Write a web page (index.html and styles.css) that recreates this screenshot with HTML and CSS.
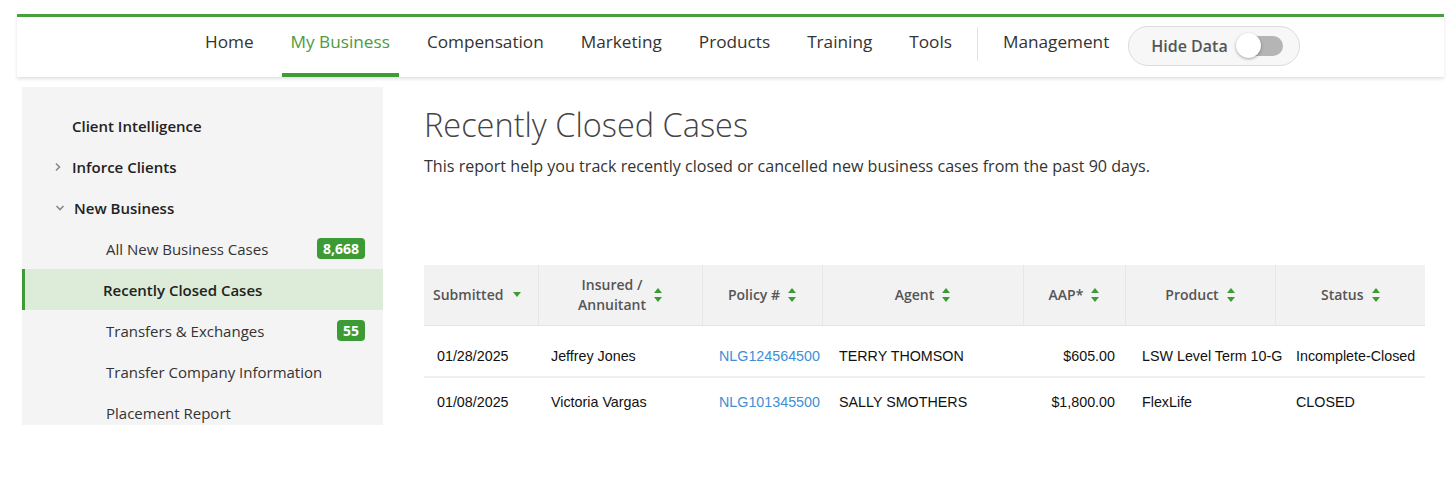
FILE: index.html
```html
<!DOCTYPE html>
<html lang="en">
<head>
  <meta charset="UTF-8">
  <title>Recently Closed Cases</title>
  <link rel="stylesheet" href="styles.css">
</head>
<body>
  <div class="page">
    <!-- Top navigation -->
    <nav class="topnav">
      <ul class="nav-links">
        <li>Home</li>
        <li class="active">My Business</li>
        <li>Compensation</li>
        <li>Marketing</li>
        <li>Products</li>
        <li>Training</li>
        <li>Tools</li>
      </ul>
      <span class="nav-divider"></span>
      <ul class="nav-links">
        <li>Management</li>
      </ul>
      <div class="hide-data">
        <span>Hide Data</span>
        <span class="toggle"><span class="knob"></span></span>
      </div>
    </nav>

    <div class="content">
      <!-- Side menu -->
      <aside class="sidebar">
        <div class="side-item top">Client Intelligence</div>
        <div class="side-item top">
          <svg class="chev" width="10" height="10" viewBox="0 0 10 10"><path d="M3 1.5 L6.5 5 L3 8.5" fill="none" stroke="#888" stroke-width="1.6"/></svg>
          Inforce Clients
        </div>
        <div class="side-item top open">
          <svg class="chev" width="10" height="10" viewBox="0 0 10 10"><path d="M1.5 3 L5 6.5 L8.5 3" fill="none" stroke="#888" stroke-width="1.6"/></svg>
          New Business
        </div>
        <div class="side-item sub">All New Business Cases <span class="badge">8,668</span></div>
        <div class="side-item sub selected">Recently Closed Cases</div>
        <div class="side-item sub">Transfers &amp; Exchanges <span class="badge">55</span></div>
        <div class="side-item sub">Transfer Company Information</div>
        <div class="side-item sub">Placement Report</div>
      </aside>

      <!-- Report -->
      <main class="main">
        <h1>Recently Closed Cases</h1>
        <p class="intro">This report help you track recently closed or cancelled new business cases from the past 90 days.</p>

        <table class="cases">
          <colgroup>
            <col class="c-sub"><col class="c-ins"><col class="c-pol"><col class="c-agt"><col class="c-aap"><col class="c-prd"><col class="c-sts">
          </colgroup>
          <thead>
            <tr>
              <th><div class="th left">Submitted <span class="sort down"></span></div></th>
              <th><div class="th">Insured /<br>Annuitant <span class="sort"></span></div></th>
              <th><div class="th">Policy # <span class="sort"></span></div></th>
              <th><div class="th">Agent <span class="sort"></span></div></th>
              <th><div class="th">AAP* <span class="sort"></span></div></th>
              <th><div class="th">Product <span class="sort"></span></div></th>
              <th><div class="th">Status <span class="sort"></span></div></th>
            </tr>
          </thead>
          <tbody>
            <tr>
              <td class="pad-s">01/28/2025</td>
              <td class="pad-s">Jeffrey Jones</td>
              <td><a href="#">NLG124564500</a></td>
              <td>TERRY THOMSON</td>
              <td class="num">$605.00</td>
              <td>LSW Level Term 10-G</td>
              <td class="pad-l">Incomplete-Closed</td>
            </tr>
            <tr>
              <td class="pad-s">01/08/2025</td>
              <td class="pad-s">Victoria Vargas</td>
              <td><a href="#">NLG101345500</a></td>
              <td>SALLY SMOTHERS</td>
              <td class="num">$1,800.00</td>
              <td>FlexLife</td>
              <td class="pad-l">CLOSED</td>
            </tr>
          </tbody>
        </table>
      </main>
    </div>
  </div>
</body>
</html>
```

FILE: styles.css
```css
body {
  margin: 0;
  background: #fff;
  font-family: "Open Sans", Arial, sans-serif;
  color: #333;
  overflow: hidden;
}

.page {
  margin: 14px 12px 0 17px;
}

/* Top nav */
.topnav {
  display: flex;
  align-items: flex-start;
  height: 60px;
  border-top: 3px solid #45a03d;
  padding-left: 179px;
  box-shadow: 0 2px 3px rgba(0, 0, 0, 0.12);
}

.nav-links {
  display: flex;
  gap: 19px;
  list-style: none;
  margin: 0;
  padding: 0;
}

.nav-links li {
  padding: 13px 9px 0;
  height: 43px;
  line-height: 24px;
  font-size: 17.2px;
  color: #333;
  border-bottom: 4px solid transparent;
}

.nav-links li.active {
  color: #4c9a43;
  border-bottom-color: #3f9a38;
}

.nav-divider {
  width: 1px;
  height: 34px;
  margin: 10px 16px 0;
  background: #e2e2e2;
}

.hide-data {
  display: flex;
  align-items: center;
  gap: 9px;
  margin: 9px 0 0 10px;
  height: 38px;
  padding: 0 16px 0 22px;
  border: 1px solid #dcdcdc;
  border-radius: 20px;
  background: #f7f7f7;
  font-size: 16px;
  font-weight: 600;
  color: #555;
}

.toggle {
  position: relative;
  width: 46px;
  height: 20px;
  border-radius: 10px;
  background: #b5b5b5;
}

.toggle .knob {
  position: absolute;
  left: -1px;
  top: -3px;
  width: 25px;
  height: 25px;
  border-radius: 50%;
  background: #fff;
  box-shadow: 0 1px 3px rgba(0, 0, 0, 0.35);
}

/* Body layout */
.content {
  display: flex;
  align-items: flex-start;
  margin-top: 10px;
}

.sidebar {
  width: 361px;
  height: 338px;
  margin-left: 5px;
  padding-top: 18px;
  box-sizing: border-box;
  background: #f4f4f4;
  overflow: hidden;
}

.side-item {
  display: flex;
  align-items: center;
  height: 41px;
  font-size: 15px;
  color: #222;
}

.side-item.top {
  font-weight: 600;
  padding-left: 50px;
}

.side-item.top .chev {
  margin-left: -19px;
  margin-right: 9px;
}

.side-item.open {
  padding-left: 52px;
}

.side-item.sub {
  padding-left: 84px;
  padding-right: 18px;
  color: #333;
}

.side-item.selected {
  padding-left: 78px;
  border-left: 3px solid #3f9a38;
  background: #dcecd8;
  font-weight: 600;
  color: #222;
}

.badge {
  margin-left: auto;
  padding: 0 6px;
  height: 21px;
  line-height: 21px;
  border-radius: 4px;
  background: #3d9b35;
  color: #fff;
  font-size: 14px;
  font-weight: 700;
}

/* Main */
.main {
  margin-left: 41px;
  flex: 1;
}

.main h1 {
  margin: 15px 0 0;
  font-size: 32.5px;
  font-weight: 300;
  color: #444;
  line-height: 46px;
}

.intro {
  margin: 7px 0 0;
  font-size: 16.1px;
  line-height: 22px;
  color: #333;
}

.cases {
  margin-top: 88px;
  width: 1001px;
  table-layout: fixed;
  border-collapse: collapse;
  font-family: "Liberation Sans", Arial, sans-serif;
  font-size: 14.3px;
  color: #111;
}

.c-sub { width: 114px; }
.c-ins { width: 164px; }
.c-pol { width: 120px; }
.c-agt { width: 201px; }
.c-aap { width: 102px; }
.c-prd { width: 150px; }
.c-sts { width: 150px; }

.cases th {
  height: 60px;
  padding: 0;
  background: #f2f2f2;
  border-left: 1px solid #e6e6e6;
  border-bottom: 1px solid #e4e4e4;
  font-family: "Open Sans", Arial, sans-serif;
  font-size: 14px;
  font-weight: 600;
  color: #555;
  line-height: 20px;
}

.cases th:first-child {
  border-left: none;
}

.th {
  display: flex;
  align-items: center;
  justify-content: center;
  gap: 8px;
  text-align: center;
}

.th.left {
  justify-content: flex-start;
  padding-left: 9px;
}

.sort {
  position: relative;
  flex: none;
  width: 8px;
  height: 14px;
}

.sort::before,
.sort::after {
  content: '';
  position: absolute;
  left: 0;
  border-left: 4px solid transparent;
  border-right: 4px solid transparent;
}

.sort::before {
  top: 0;
  border-bottom: 5px solid #3d9b35;
}

.sort::after {
  bottom: 0;
  border-top: 5px solid #3d9b35;
}

.sort.down {
  margin-left: 2px;
}

.sort.down::before {
  display: none;
}

.sort.down::after {
  bottom: 5px;
}

.cases td {
  padding: 0 0 0 17px;
  white-space: nowrap;
}

.cases tbody tr:first-child td {
  height: 40px;
  padding-top: 10px;
  border-bottom: 2px solid #efefef;
}

.cases tbody tr:last-child td {
  height: 48px;
  padding-top: 0;
}

.cases td.pad-s {
  padding-left: 13px;
}

.cases td.num {
  text-align: right;
  padding-left: 0;
  padding-right: 10px;
}

.cases td.pad-l {
  padding-left: 21px;
}

.cases a {
  color: #3d8fd6;
  text-decoration: none;
}
```
